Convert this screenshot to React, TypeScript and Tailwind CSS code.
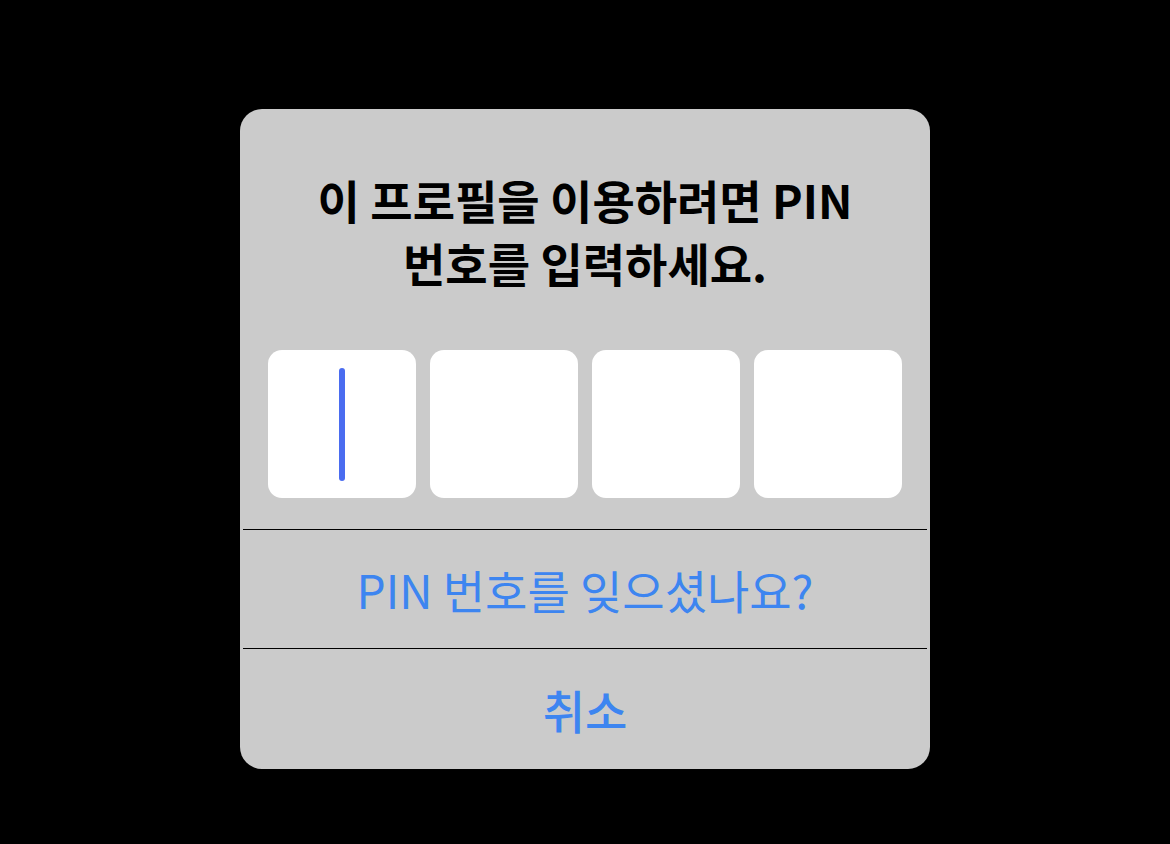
import React from 'react';

const FONT = { fontFamily: '"Noto Sans CJK KR", "Noto Sans", sans-serif' };

const PinBox = ({ active }: { active?: boolean }) => (
  <div className="w-[148px] h-[148px] bg-white rounded-[14px] flex items-center justify-center">
    {active && <div className="w-[6px] h-[113px] rounded-full bg-[#4a6cf0]" />}
  </div>
);

export default function App() {
  return (
    <div className="min-h-screen w-full bg-black flex justify-center pt-[109px]" style={FONT}>
      <div className="w-[690px] h-[660px] bg-[#cbcbcb] rounded-[22px] flex flex-col overflow-hidden">
        <h1 className="pt-[59px] text-center text-[46px] leading-[63px] font-bold text-black">
          이 프로필을 이용하려면 PIN
          <br />
          번호를 입력하세요.
        </h1>

        <div className="mt-[56px] px-[28px] flex gap-[14px]">
          <PinBox active />
          <PinBox />
          <PinBox />
          <PinBox />
        </div>

        <div className="mt-[31px] mx-[3px] h-px bg-black" />
        <button className="h-[118px] flex items-center justify-center text-[46px] text-[#3d85f0] font-normal">
          PIN 번호를 잊으셨나요?
        </button>
        <div className="mx-[3px] h-px bg-black" />
        <button className="flex-1 flex items-center justify-center text-[46px] text-[#3d85f0] font-medium">
          취소
        </button>
      </div>
    </div>
  );
}
